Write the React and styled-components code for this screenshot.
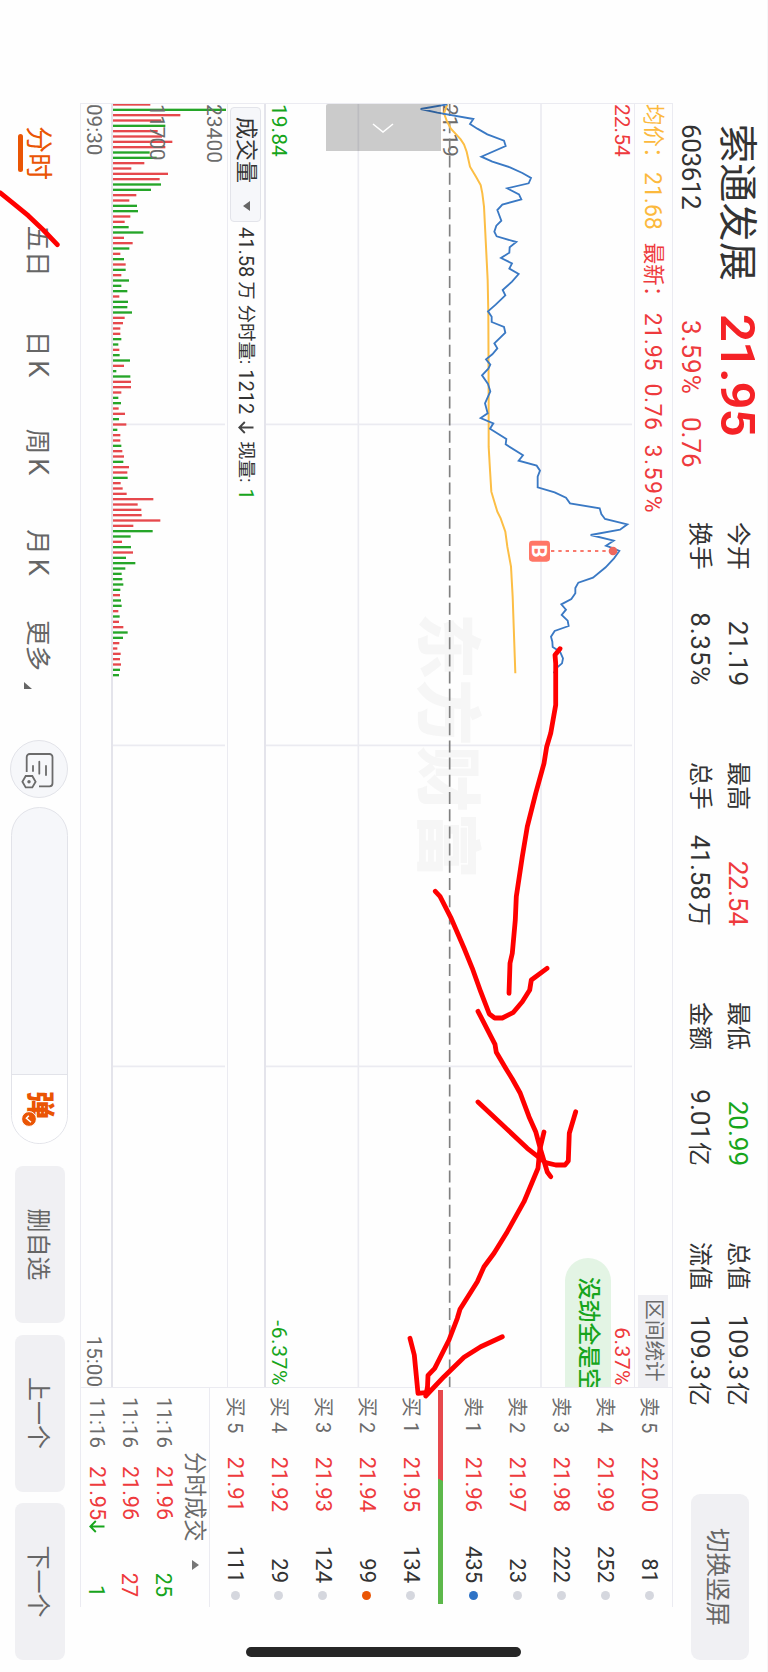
import React from "react";
import styled, { createGlobalStyle } from "styled-components";

const RED = "#ee3a3d";
const GREEN = "#17a51c";
const ORANGE = "#ea5504";
const LINE = "#ebebf1";

const GlobalStyle = createGlobalStyle`
  * {
    box-sizing: border-box;
  }
  body {
    margin: 0;
    background: #fefefe;
    font-family: Roboto, "Noto Sans CJK SC", sans-serif;
    color: #333333;
  }
`;

const Page = styled.div`
  position: relative;
  width: 768px;
  height: 1672px;
  overflow: hidden;
`;

/* the app runs in landscape, the device is held upright */
const Screen = styled.div`
  width: 1672px;
  height: 768px;
  display: flex;
  flex-direction: column;
  background: #fefefe;
  white-space: nowrap;
  transform-origin: 0 0;
  transform: translateX(768px) rotate(90deg);
`;

const Header = styled.header`
  display: flex;
  height: 95px;
  padding-left: 124px;
  border-top: 1px solid #f6f6f8;
`;

const Quote = styled.div`
  width: 398px;
  padding-top: 1px;
`;

const NameRow = styled.div`
  display: flex;
  align-items: center;
  height: 57px;
`;

const StockName = styled.h1`
  width: 190px;
  margin: 2px 0 0;
  font-size: 39px;
  font-weight: 400;
  line-height: 57px;
  letter-spacing: 0.3px;
`;

const LastPrice = styled.div`
  color: #f52226;
  font-size: 49px;
  font-weight: 600;
  line-height: 57px;
  letter-spacing: -0.8px;
`;

const CodeRow = styled.div`
  display: flex;
  height: 36px;
  line-height: 37px;
  font-size: 26px;
`;

const Code = styled.span`
  width: 196px;
  letter-spacing: -0.4px;
`;

const Change = styled.span`
  width: 97px;
  color: ${RED};
  letter-spacing: ${(props) => props.$spacing || 0}px;
`;

const Stats = styled.dl`
  display: grid;
  grid-template-columns: repeat(4, 165px);
  grid-template-rows: 38px 38px;
  column-gap: 75px;
  margin: 10px 0 0;
  width: 972px;
`;

const Stat = styled.div`
  display: flex;
  justify-content: space-between;
  line-height: 38px;
  font-size: 24px;

  dd {
    margin: 0 1px 0 0;
    font-size: 26px;
    letter-spacing: ${(props) => props.$spacing || 0}px;
    color: ${(props) => props.$color || "#333333"};
  }
  small {
    margin-left: 2px;
    font-size: 24px;
  }
`;

const RotateButton = styled.button`
  width: 166px;
  height: 58px;
  margin-top: 18px;
  padding: 0;
  border: 0;
  border-radius: 9px;
  background: #f0f0f3;
  color: #666666;
  font-family: inherit;
  font-size: 24.5px;
`;

const Main = styled.main`
  display: flex;
  width: 1504px;
  height: 593px;
  margin-left: 103px;
  border-top: 1px solid ${LINE};
  border-bottom: 1px solid ${LINE};
`;

const Charts = styled.section`
  width: 1285px;
  border-left: 1px solid ${LINE};
  border-right: 1px solid ${LINE};
`;

const InfoRow = styled.div`
  display: flex;
  align-items: center;
  height: 37px;
  font-size: 23px;
  line-height: 39px;
  color: ${RED};
`;

const InfoLabel = styled.span`
  width: ${(props) => props.$width}px;
  font-size: 21.5px;
  color: ${(props) => props.$color};
`;

const InfoValue = styled.span`
  margin: 1px ${(props) => props.$gap || 0}px 0 0;
  letter-spacing: ${(props) => props.$spacing || 0}px;
  color: ${(props) => props.$color};
`;

const RangeStats = styled.div`
  width: 92px;
  height: 30px;
  margin-left: auto;
  padding-left: 4px;
  background: #efeff3;
  color: #6b6b6b;
  font-size: 20.7px;
  line-height: 29px;
`;

const PriceChart = styled.div`
  position: relative;
  height: 369px;
  border-top: 1px solid ${LINE};
  overflow: hidden;
`;

const PriceLayer = styled.svg`
  position: relative;
  display: block;
`;

const Watermark = styled.div`
  position: absolute;
  left: 509px;
  top: 145px;
  color: #f6f6f6;
  font-family: "Noto Sans CJK SC", sans-serif;
  font-size: 66px;
  font-weight: 900;
  line-height: 72px;
  letter-spacing: 0.5px;
`;

const AxisLabel = styled.span`
  position: absolute;
  ${(props) => (props.$right ? "right: 1px;" : "left: 0;")}
  top: ${(props) => props.$top}px;
  color: ${(props) => props.$color || "#6b6b6b"};
  font-size: 21px;
  line-height: 24px;
  letter-spacing: ${(props) => props.$spacing || 0}px;
`;

const Drawer = styled.div`
  position: absolute;
  left: 0;
  top: 193px;
  width: 47px;
  height: 115px;
  display: flex;
  align-items: center;
  justify-content: center;
  border-radius: 2px 0 0 2px;
  background: rgba(0, 0, 0, 0.2);
`;

const Bubble = styled.div`
  position: absolute;
  right: 0;
  top: 23px;
  width: 129px;
  height: 46px;
  padding-left: 19px;
  overflow: hidden;
  border-radius: 23px 0 0 23px;
  background: #e3f4e4;
  color: ${GREEN};
  font-size: 22.8px;
  font-weight: 500;
  line-height: 46px;
`;

const VolumeHeader = styled.div`
  display: flex;
  align-items: center;
  height: 38px;
  padding-left: 3px;
  border-top: 2px solid #e4e4eb;
  font-size: 20px;
`;

const IndicatorSelect = styled.div`
  display: flex;
  align-items: center;
  justify-content: space-between;
  width: 115px;
  height: 31px;
  margin-right: 5px;
  padding: 0 10px 1px 9px;
  border: 1px solid #e3e4ea;
  border-radius: 4px;
  background: #f6f7fa;
  font-size: 22px;
  line-height: 28px;
`;

const Caret = styled.i`
  width: 0;
  height: 0;
  border: solid transparent;
  border-width: 0 5px;
  ${(props) =>
    props.$up ? "border-bottom: 7px solid #777777;" : "border-top: 7px solid #666666;"}
`;

const VolumeText = styled.span`
  display: flex;
  align-items: center;
  line-height: 32px;
`;

const VolumePart = styled.span`
  margin-right: ${(props) => props.$gap || 0}px;
  font-size: ${(props) => (props.$small ? 18.4 : 20)}px;
  color: ${(props) => props.$color};
`;

const VolumeChart = styled.div`
  position: relative;
  height: 115px;
  border-top: 1px solid ${LINE};

  svg {
    display: block;
  }
`;

const TimeAxis = styled.div`
  display: flex;
  justify-content: space-between;
  height: 32px;
  border-top: 2px solid #e4e4eb;
  color: #6b6b6b;
  font-size: 20.6px;
  line-height: 34px;
`;

const OrderBook = styled.aside`
  width: 219px;
`;

const Orders = styled.div`
  padding-top: ${(props) => props.$pad || 0}px;
`;

const Order = styled.div`
  display: flex;
  align-items: center;
  height: 43.9px;
  padding-left: 9px;
  line-height: 44px;
  font-size: 22px;
`;

const OrderLabel = styled.span`
  width: 44px;
  color: #6b6b6b;
  font-size: 20px;
`;

const OrderPrice = styled.span`
  width: 71px;
  text-align: right;
  color: ${RED};
`;

const OrderSize = styled.span`
  width: 71px;
  text-align: right;
`;

const Dot = styled.i`
  width: 9px;
  height: 9px;
  margin-left: 8px;
  border-radius: 50%;
  background: ${(props) => props.$color || "#d5d7de"};
`;

const Ratio = styled.div`
  width: 214px;
  height: 5px;
  margin: 9px 0 5px 2px;
  background: linear-gradient(120deg, #e7494d 79px, #5db84b 79px);
`;

const Trades = styled.div`
  margin-top: 3px;
  border-top: 1px solid ${LINE};
`;

const TradesHead = styled.div`
  display: flex;
  align-items: center;
  height: 28px;
  padding-left: 64px;
  gap: 18px;
  color: #6b6b6b;
  font-size: 22.4px;
  line-height: 28px;
`;

const Trade = styled.div`
  display: flex;
  height: 33.6px;
  padding-left: 9px;
  font-size: 21.5px;
  line-height: 35px;
`;

const TradeTime = styled.span`
  width: 69px;
  color: #6b6b6b;
  font-size: 20.5px;
`;

const TradePrice = styled.span`
  display: flex;
  align-items: center;
  width: 80px;
  color: ${RED};
`;

const TradeSize = styled.span`
  width: 51px;
  text-align: right;
  color: ${(props) => (props.$down ? GREEN : RED)};
`;

const Toolbar = styled.nav`
  display: flex;
  align-items: center;
  height: 80px;
  padding-left: 104px;
`;

const Tab = styled.a`
  position: relative;
  width: ${(props) => props.$width}px;
  margin-top: 3px;
  text-align: center;
  font-size: 25.5px;
  line-height: 36px;
  color: #666666;

  small {
    margin-left: 4px;
    font-size: 27px;
  }
`;

const ActiveTab = styled(Tab)`
  color: ${ORANGE};
  font-size: 27px;

  &:after {
    content: "";
    position: absolute;
    left: 50%;
    bottom: -2px;
    width: 38px;
    height: 5px;
    margin-left: -19px;
    border-radius: 3px;
    background: ${ORANGE};
  }
`;

const MoreMark = styled.i`
  position: absolute;
  right: -7px;
  bottom: 4px;
  width: 0;
  height: 0;
  border-left: 7px solid transparent;
  border-bottom: 8px solid #666666;
`;

const RoundButton = styled.button`
  display: flex;
  align-items: center;
  justify-content: center;
  width: 58px;
  height: 58px;
  margin: 1px 9px 0 58px;
  padding: 2px 0 0 3px;
  border: 1px solid #e2e3e9;
  border-radius: 50%;
  background: #f6f7fa;
`;

const CommentBox = styled.div`
  display: flex;
  justify-content: flex-end;
  width: 337px;
  height: 57px;
  margin: 1px 22px 0 0;
  overflow: hidden;
  border: 1px solid #e2e3e9;
  border-radius: 29px;
  background: #f6f7fa;
`;

const Danmu = styled.div`
  position: relative;
  width: 69px;
  padding-left: 16px;
  border-left: 1px solid #e2e3e9;
  background: #ffffff;
  color: ${ORANGE};
  font-family: "Noto Sans CJK SC", sans-serif;
  font-size: 28px;
  font-weight: 900;
  line-height: 51px;

  svg {
    position: absolute;
    left: 36px;
    top: 30px;
  }
`;

const ActionButton = styled.button`
  width: 157px;
  height: 50px;
  margin-right: 11.5px;
  padding: 0 0 1px;
  border: 0;
  border-radius: 8px;
  background: #f0f0f3;
  color: #666666;
  font-family: inherit;
  font-size: 24px;
`;

const HomeIndicator = styled.div`
  position: absolute;
  left: 1647px;
  top: 247px;
  width: 10px;
  height: 275px;
  border-radius: 5px;
  background: #262626;
`;

const Marker = styled.svg`
  position: absolute;
  left: 0;
  top: 0;
  fill: none;
  stroke: #ff0000;
  stroke-width: 4.8;
  stroke-linecap: round;
  stroke-linejoin: round;
`;

const stats = [
  { label: "今开", value: "21.19" },
  { label: "最高", value: "22.54", color: RED },
  { label: "最低", value: "20.99", color: GREEN },
  { label: "总值", value: "109.3", unit: "亿" },
  { label: "换手", value: "8.35%", spacing: 0.8 },
  { label: "总手", value: "41.58", unit: "万" },
  { label: "金额", value: "9.01", unit: "亿" },
  { label: "流值", value: "109.3", unit: "亿" },
];

const sells = [
  ["卖 5", "22.00", 81],
  ["卖 4", "21.99", 252],
  ["卖 3", "21.98", 222],
  ["卖 2", "21.97", 23],
  ["卖 1", "21.96", 435, "#2f73c6"],
];

const buys = [
  ["买 1", "21.95", 134],
  ["买 2", "21.94", 99, ORANGE],
  ["买 3", "21.93", 124],
  ["买 4", "21.92", 29],
  ["买 5", "21.91", 111],
];

const trades = [
  { time: "11:16", price: "21.96", size: 25, down: true },
  { time: "11:16", price: "21.96", size: 27 },
  { time: "11:16", price: "21.95", size: 1, down: true, arrow: true },
];

// [time, level] pairs, three units per pixel
const price = [
  [73, 190], [87, 110], [98, 160], [117, 268], [132, 258], [146, 280], [163, 310], [182, 360],
  [198, 365], [230, 292], [245, 325], [262, 378], [279, 415], [294, 441], [310, 434], [325, 370],
  [343, 405], [358, 412], [374, 355], [390, 340], [422, 352], [437, 337], [455, 331], [469, 338],
  [486, 397], [502, 377], [518, 376], [534, 351], [550, 384], [566, 376], [582, 404], [605, 384],
  [630, 356], [646, 364], [674, 335], [694, 312], [710, 323], [726, 323], [741, 360], [758, 364],
  [790, 331], [805, 340], [823, 325], [838, 306], [854, 319], [866, 313], [886, 294], [912, 312],
  [934, 319], [970, 303], [1000, 311], [1014, 290], [1030, 328], [1046, 318], [1077, 367],
  [1093, 365], [1126, 417], [1142, 404], [1157, 458], [1172, 468], [1190, 461], [1222, 461],
  [1237, 512], [1253, 546], [1270, 558], [1285, 647], [1302, 652], [1317, 663], [1333, 730],
  [1349, 708], [1365, 620], [1382, 689], [1397, 666], [1402, 680], [1413, 706], [1435, 690],
  [1462, 665], [1493, 627], [1508, 583], [1524, 574], [1540, 574], [1557, 562], [1573, 532],
  [1589, 546], [1605, 533], [1622, 551], [1638, 554], [1653, 512], [1670, 501], [1685, 505],
  [1701, 506], [1715, 528], [1735, 537], [1750, 534], [1762, 520], [1780, 509],
];

const average = [
  [73, 190], [100, 180], [122, 188], [145, 200], [178, 230], [193, 240], [215, 248], [260, 258],
  [290, 276], [315, 290], [340, 295], [380, 300], [500, 306], [600, 311], [700, 313], [960, 314],
  [1100, 314], [1170, 318], [1235, 322], [1265, 331], [1295, 340], [1315, 350], [1355, 364],
  [1400, 370], [1460, 381], [1550, 386], [1780, 394],
];

// falling minutes are negative
const volumes = [
  112, -339, 202, 145, -157, 134, 147, 178, 157, -110, -131, 94, 55, 165, 140, -144, -114, 70, 49,
  -72, -75, 52, 35, -47, -91, 33, 59, -49, 22, -33, 38, -38, 25, -48, -25, -43, 19, -45, -43, -57,
  35, 30, 22, 22, -25, -16, 19, -20, -51, 33, -10, -52, 54, 54, 25, -16, -24, 17, 36, -18, 40, -13,
  22, 22, -25, 28, 33, -31, 48, 43, -44, 23, 29, 41, 121, 74, 85, 86, 142, 61, -119, -53, 27, -54,
  60, -39, -67, -37, -26, -28, -31, -22, 21, -24, -26, 16, -20, 18, 31, -44, -30, 19, 13, 23, 21,
  24, -21, -18,
];

const strokes = [
  "0,192.7 13.3,203.3 28.3,215.7 43.3,230 57.3,244.7",
  "560,648.7 555,655 555.7,663.3 555.7,705 550.7,733.3 546.7,746.7 544,763.3 535.7,793.3 527.3,826.7 522.3,856.7 516.3,896.7 515.3,920 512.3,953.3 510,963.3 509,993.3",
  "435.3,891.3 440,896.3 450.7,917.3 464,948 472.3,968.3 480.7,991.7 489.3,1014 494.7,1018 502.3,1018 513,1012.7 522.3,1001.7 529.7,990 531.3,980 547,968.3",
  "478,1011.3 495,1044.3 496.3,1052.3 505.7,1068.3 512.3,1079 520,1092.7 529,1116.7 535.7,1131.7 540.7,1150 547.3,1172 550.7,1176.7",
  "478,1102 500.7,1123.3 527.3,1148.3 545.7,1162.7 555.7,1165 565,1165 568.3,1161 569.3,1133.3 575.7,1111.7",
  "544,1132 539.7,1150 538,1168.3 524,1201.7 507.3,1231.7 494,1253.3 484,1266.7 477.3,1281.7 460,1309.3 457.3,1318.3 449,1340 434.7,1368.3 428,1375.3 427.3,1391.7",
  "410,1338.3 414.3,1355 418,1393.3 425.7,1392.7",
  "502.3,1336.7 480.7,1346.7 464,1357.3 444,1376.7 425.7,1396 427.3,1388",
];

const toPoints = (series) => series.map(([t, v]) => `${t - 72},${750 - v}`).join(" ");

const gridX = [961, 1924, 2887];

function PriceLines() {
  return (
    <PriceLayer width="1283" height="368" viewBox="0 0 3849 1104" fill="none">
      <g stroke={LINE} strokeWidth="5">
        {gridX.map((x) => (
          <path key={x} d={`M${x} 6V1104`} />
        ))}
        <path d="M0 279H3849M0 827H3849" />
      </g>
      <path d="M0 553H3849" stroke="#808080" strokeWidth="5" strokeDasharray="36 15.6" />
      <polyline points={toPoints(average)} stroke="#fcbe45" strokeWidth="6" />
      <polyline points={toPoints(price)} stroke="#3a79c4" strokeWidth="5.5" />
      <path d="M1341 249V68" stroke="#f9796c" strokeWidth="6" strokeDasharray="10 12" />
      <circle cx="1341" cy="63" r="13" fill="#ee675e" />
      <rect x="1310" y="252" width="63" height="63" rx="10" fill="#ff7666" />
      <text x="1341" y="305" fill="#ffffff" fontSize="62" fontWeight="700" textAnchor="middle">
        B
      </text>
    </PriceLayer>
  );
}

function VolumeBars() {
  return (
    <svg width="1283" height="114" viewBox="0 0 3849 342">
      <path d="M961 6V342M1924 6V342M2887 6V342" stroke={LINE} strokeWidth="5" />
      {volumes.map((v, i) => (
        <rect
          key={i}
          x={16 * i - 2}
          y={342 - Math.abs(v)}
          width="7"
          height={Math.abs(v)}
          fill={v > 0 ? "#e6484c" : "#25a528"}
        />
      ))}
    </svg>
  );
}

function SettingsIcon() {
  return (
    <svg width="38" height="34" viewBox="0 0 38 34" fill="none" stroke="#6b6b6b" strokeWidth="1.8">
      <path d="M20 28.3H5a3 3 0 0 1-3-3V5.5a3 3 0 0 1 3-3h26.3a3 3 0 0 1 3 3V16" />
      <path d="M14 22h5M9.7 15.7h12M14 9h9" strokeLinecap="round" />
      <path d="M29.7 19.4l5.7 3.3v6.6l-5.7 3.3-5.7-3.3v-6.6z" />
      <circle cx="29.7" cy="26" r="1.7" fill="#6b6b6b" stroke="none" />
    </svg>
  );
}

function DownArrow({ color }) {
  return (
    <svg width="13" height="16" viewBox="0 0 13 16" fill="none" stroke={color} strokeWidth="1.9">
      <path d="M6.5 0.5V14.5M1 9.2l5.5 5.5L12 9.2" />
    </svg>
  );
}

function OrderRow({ order }) {
  const [label, value, size, color] = order;
  return (
    <Order>
      <OrderLabel>{label}</OrderLabel>
      <OrderPrice>{value}</OrderPrice>
      <OrderSize>{size}</OrderSize>
      <Dot $color={color} />
    </Order>
  );
}

function App() {
  return (
    <Page>
      <GlobalStyle />
      <Screen>
        <Header>
          <Quote>
            <NameRow>
              <StockName>索通发展</StockName>
              <LastPrice>21.95</LastPrice>
            </NameRow>
            <CodeRow>
              <Code>603612</Code>
              <Change $spacing={1}>3.59%</Change>
              <Change>0.76</Change>
            </CodeRow>
          </Quote>
          <Stats>
            {stats.map((item) => (
              <Stat key={item.label} $color={item.color} $spacing={item.spacing}>
                <dt>{item.label}</dt>
                <dd>
                  {item.value}
                  {item.unit && <small>{item.unit}</small>}
                </dd>
              </Stat>
            ))}
          </Stats>
          <RotateButton>切换竖屏</RotateButton>
        </Header>

        <Main>
          <Charts>
            <InfoRow>
              <InfoLabel $width={68} $color="#fcb93d">均价：</InfoLabel>
              <InfoValue $gap={13} $color="#fcb93d">21.68</InfoValue>
              <InfoLabel $width={70}>最新：</InfoLabel>
              <InfoValue $gap={13}>21.95</InfoValue>
              <InfoValue $gap={14} $spacing={0.5}>0.76</InfoValue>
              <InfoValue $spacing={1.6}>3.59%</InfoValue>
              <RangeStats>区间统计</RangeStats>
            </InfoRow>

            <PriceChart>
              <Watermark>东方财富</Watermark>
              <AxisLabel $top={172}>21.19</AxisLabel>
              <PriceLines />
              <AxisLabel $top={0} $color={RED}>22.54</AxisLabel>
              <AxisLabel $top={0} $right $color={RED} $spacing={0.5}>6.37%</AxisLabel>
              <AxisLabel $top={343} $color={GREEN}>19.84</AxisLabel>
              <AxisLabel $top={343} $right $color={GREEN} $spacing={0.6}>-6.37%</AxisLabel>
              <Drawer>
                <svg width="10" height="22" viewBox="0 0 10 22" fill="none" stroke="#ffffff" strokeWidth="1.6">
                  <path d="M1 1L9 11L1 21" />
                </svg>
              </Drawer>
              <Bubble>没劲全是空</Bubble>
            </PriceChart>

            <VolumeHeader>
              <IndicatorSelect>
                成交量
                <Caret />
              </IndicatorSelect>
              <VolumeText>
                <VolumePart $gap={4}>41.58</VolumePart>
                <VolumePart $gap={5} $small>万</VolumePart>
                <VolumePart $gap={5} $small>分时量:</VolumePart>
                <VolumePart $gap={7}>1212</VolumePart>
                <DownArrow color="#444444" />
                <VolumePart $small style={{ marginLeft: 7 }} $gap={6}>现量:</VolumePart>
                <VolumePart $color={GREEN}>1</VolumePart>
              </VolumeText>
            </VolumeHeader>

            <VolumeChart>
              <VolumeBars />
              <AxisLabel $top={1}>23400</AxisLabel>
              <AxisLabel $top={58} $spacing={-0.6}>11700</AxisLabel>
            </VolumeChart>

            <TimeAxis>
              <span>09:30</span>
              <span>15:00</span>
            </TimeAxis>
          </Charts>

          <OrderBook>
            <Orders $pad={1}>
              {sells.map((order) => (
                <OrderRow key={order[0]} order={order} />
              ))}
            </Orders>
            <Ratio />
            <Orders>
              {buys.map((order) => (
                <OrderRow key={order[0]} order={order} />
              ))}
            </Orders>
            <Trades>
              <TradesHead>
                分时成交
                <Caret $up />
              </TradesHead>
              {trades.map((trade, i) => (
                <Trade key={i}>
                  <TradeTime>{trade.time}</TradeTime>
                  <TradePrice>
                    {trade.price}
                    {trade.arrow && <DownArrow color={GREEN} />}
                  </TradePrice>
                  <TradeSize $down={trade.down}>{trade.size}</TradeSize>
                </Trade>
              ))}
            </Trades>
          </OrderBook>
        </Main>

        <Toolbar>
          <ActiveTab $width={98}>分时</ActiveTab>
          <Tab $width={98}>五日</Tab>
          <Tab $width={108}>
            日<small>K</small>
          </Tab>
          <Tab $width={88}>
            周<small>K</small>
          </Tab>
          <Tab $width={113}>
            月<small>K</small>
          </Tab>
          <Tab $width={73}>
            更多
            <MoreMark />
          </Tab>
          <RoundButton>
            <SettingsIcon />
          </RoundButton>
          <CommentBox>
            <Danmu>
              弹
              <svg width="16" height="16" viewBox="0 0 16 16">
                <circle cx="8" cy="8" r="7.4" fill={ORANGE} stroke="#ffffff" />
                <path d="M4.8 8.2l2.5 2.4 4-4.6" fill="none" stroke="#ffffff" strokeWidth="1.5" />
              </svg>
            </Danmu>
          </CommentBox>
          <ActionButton>删自选</ActionButton>
          <ActionButton>上一个</ActionButton>
          <ActionButton>下一个</ActionButton>
        </Toolbar>

        <HomeIndicator />
      </Screen>

      <Marker width="768" height="1672" viewBox="0 0 768 1672">
        {strokes.map((points) => (
          <polyline key={points} points={points} />
        ))}
      </Marker>
    </Page>
  );
}

export default App;
